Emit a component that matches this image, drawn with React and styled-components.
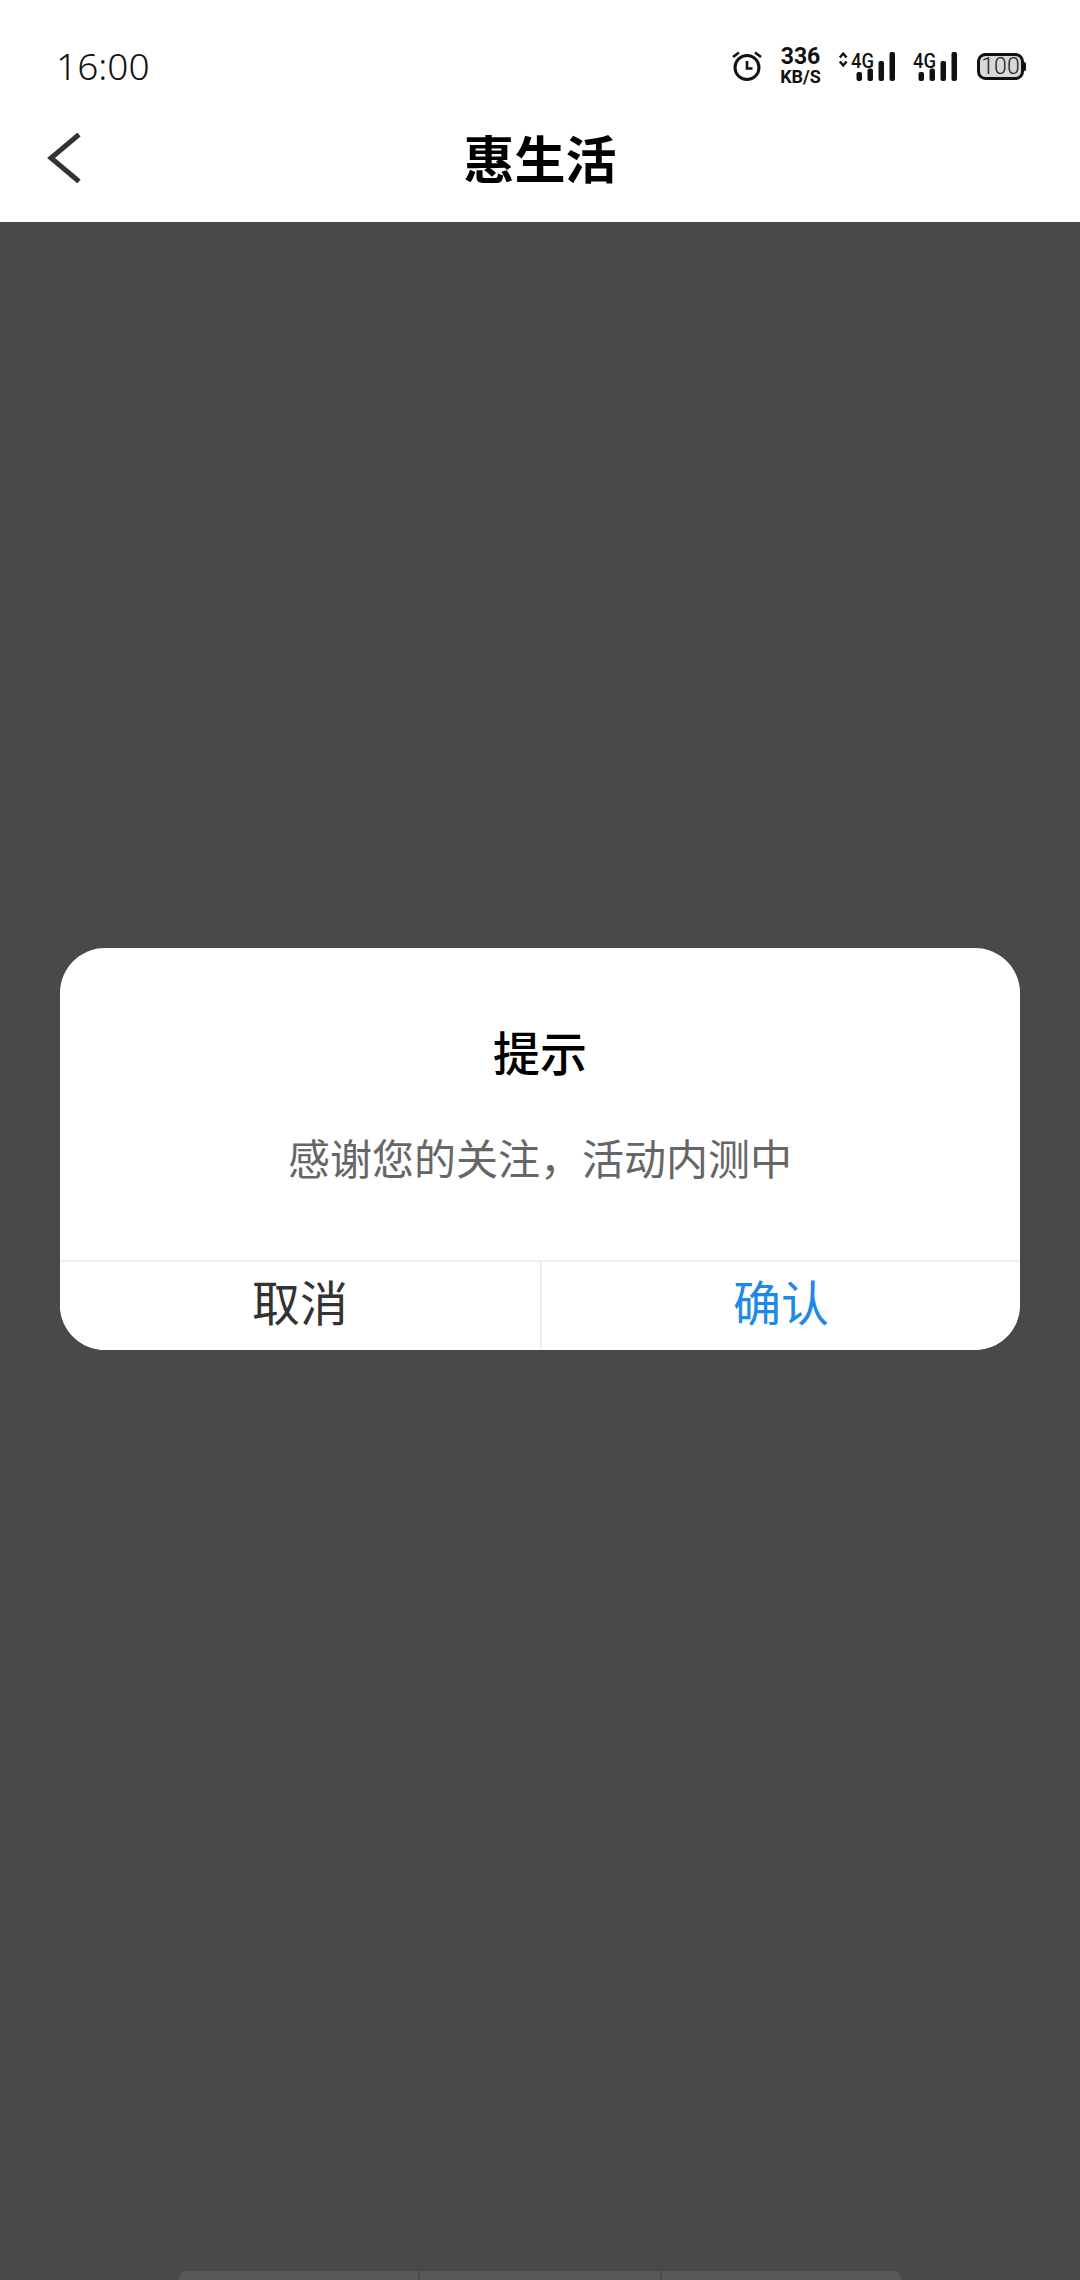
import React from 'react';
import styled, { createGlobalStyle } from 'styled-components';

const CJK = '"Noto Sans CJK SC", "Noto Sans", sans-serif';

const GlobalStyle = createGlobalStyle`
  html, body {
    margin: 0;
    padding: 0;
    background: #494949;
  }
  * {
    box-sizing: border-box;
  }
`;

const Page = styled.div`
  width: 1080px;
  height: 2280px;
  display: flex;
  flex-direction: column;
  overflow: hidden;
  font-family: ${CJK};
`;

const StatusBar = styled.div`
  height: 94px;
  padding: 38px 54px 0 56px;
  display: flex;
  align-items: center;
  justify-content: space-between;
  background: #fff;
`;

const Time = styled.span`
  font-family: "Noto Sans", sans-serif;
  font-weight: 300;
  font-size: 37px;
  line-height: 54px;
  color: #111;
`;

const StatusIcons = styled.div`
  display: flex;
  align-items: center;
  gap: 19px;
`;

const Speed = styled.div`
  width: 39px;
  display: flex;
  flex-direction: column;
  align-items: center;
  font-family: Roboto, sans-serif;
  font-weight: 700;
  color: #111;
`;

const SpeedValue = styled.span`
  font-size: 23px;
  line-height: 22px;
`;

const SpeedUnit = styled.span`
  font-size: 18px;
  line-height: 18px;
  white-space: nowrap;
`;

const NavBar = styled.header`
  height: 128px;
  display: grid;
  grid-template-columns: 1fr auto 1fr;
  align-items: center;
  background: #fff;
`;

const BackButton = styled.button`
  justify-self: start;
  margin-left: 47px;
  padding: 0;
  border: 0;
  background: none;
  display: flex;
`;

const NavTitle = styled.h1`
  margin: 0 0 2px;
  font-size: 51px;
  font-weight: 700;
  line-height: 70px;
  color: #000;
`;

const Overlay = styled.main`
  flex: 1;
  min-height: 0;
  display: flex;
  flex-direction: column;
  align-items: center;
  background: #494949;
`;

const Dialog = styled.section`
  width: 960px;
  height: 402px;
  margin-top: 726px;
  display: flex;
  flex-direction: column;
  background: #fff;
  border-radius: 45px;
  overflow: hidden;
`;

const DialogBody = styled.div`
  flex: 1;
  padding-top: 73px;
  display: flex;
  flex-direction: column;
  align-items: center;
  gap: 46px;
`;

const DialogTitle = styled.h2`
  margin: 0;
  font-size: 47px;
  font-weight: 500;
  line-height: 60px;
  color: #000;
`;

const DialogText = styled.p`
  margin: 0;
  font-size: 42px;
  font-weight: 400;
  line-height: 60px;
  color: #666;
`;

const DialogActions = styled.div`
  height: 90px;
  display: grid;
  grid-template-columns: 1fr 1fr;
  border-top: 2px solid #eeeeee;
`;

const ActionButton = styled.button`
  padding: 0 0 13px;
  border: 0;
  background: #fff;
  font-family: inherit;
  font-size: 48px;
  line-height: 70px;
  color: ${(p) => (p.$primary ? '#2089e6' : '#333')};
  & + & {
    border-left: 2px solid #eeeeee;
  }
`;

const TabStrip = styled.div`
  width: 722px;
  height: 9px;
  margin-top: auto;
  display: flex;
  gap: 2px;
  border-radius: 8px 8px 0 0;
  overflow: hidden;
`;

const TabSegment = styled.div`
  flex: 1;
  background: #585858;
`;

const SignalSvg = styled.svg`
  overflow: visible;
`;

const AlarmIcon = () => (
  <svg width="30" height="30" viewBox="0 0 30 30" fill="none" stroke="#111" strokeWidth="3">
    <circle cx="15" cy="16.5" r="12" />
    <path d="M15 10v7.5h5.5" strokeWidth="2.6" />
    <path d="M1 6l6-4.5M29 6l-6-4.5" strokeWidth="2.6" />
  </svg>
);

const Bars = ({ x }) => (
  <g fill="#111">
    <rect x={x} y="20" width="5.5" height="9" rx="2" />
    <rect x={x + 11} y="16.5" width="5.5" height="12.5" rx="2" />
    <rect x={x + 22} y="9" width="5.5" height="20" rx="2" />
    <rect x={x + 33} y="0" width="5.5" height="29" rx="2" />
  </g>
);

const NetworkLabel = ({ x }) => (
  <text
    x={x}
    y="15.6"
    fontFamily="Roboto, sans-serif"
    fontSize="21"
    fontWeight="500"
    fill="#111"
    textLength="23"
    lengthAdjust="spacingAndGlyphs"
  >
    4G
  </text>
);

const SignalWithArrows = () => (
  <SignalSvg width="56" height="29" viewBox="0 0 56 29">
    <path d="M0.8 5.5L4.2 1.5L7.6 5.5M0.8 9.5L4.2 13.5L7.6 9.5" fill="none" stroke="#111" strokeWidth="2.4" />
    <NetworkLabel x={12} />
    <Bars x={17.5} />
  </SignalSvg>
);

const Signal = () => (
  <SignalSvg width="44" height="29" viewBox="0 0 44 29">
    <NetworkLabel x={-1} />
    <Bars x={4.5} />
  </SignalSvg>
);

const BatteryIcon = () => (
  <svg width="49" height="27" viewBox="0 0 49 27">
    <rect x="1.5" y="1.5" width="44" height="24" rx="7" fill="#d8d8d8" stroke="#111" strokeWidth="3" />
    <rect x="46" y="9" width="3" height="9" rx="1.5" fill="#111" />
    <text x="23.5" y="21" textAnchor="middle" fontFamily="Roboto, sans-serif" fontWeight="300" fontSize="23" fill="#222">
      100
    </text>
  </svg>
);

const BackIcon = () => (
  <svg width="34" height="50" viewBox="0 0 34 50" fill="none" stroke="#333" strokeWidth="5">
    <path d="M32 1.5L4 25l28 23.5" />
  </svg>
);

export default function App() {
  return (
    <Page>
      <GlobalStyle />
      <StatusBar>
        <Time>16:00</Time>
        <StatusIcons>
          <AlarmIcon />
          <Speed>
            <SpeedValue>336</SpeedValue>
            <SpeedUnit>KB/S</SpeedUnit>
          </Speed>
          <SignalWithArrows />
          <Signal />
          <BatteryIcon />
        </StatusIcons>
      </StatusBar>
      <NavBar>
        <BackButton>
          <BackIcon />
        </BackButton>
        <NavTitle>惠生活</NavTitle>
      </NavBar>
      <Overlay>
        <Dialog>
          <DialogBody>
            <DialogTitle>提示</DialogTitle>
            <DialogText>感谢您的关注，活动内测中</DialogText>
          </DialogBody>
          <DialogActions>
            <ActionButton>取消</ActionButton>
            <ActionButton $primary>确认</ActionButton>
          </DialogActions>
        </Dialog>
        <TabStrip>
          <TabSegment />
          <TabSegment />
          <TabSegment />
        </TabStrip>
      </Overlay>
    </Page>
  );
}
